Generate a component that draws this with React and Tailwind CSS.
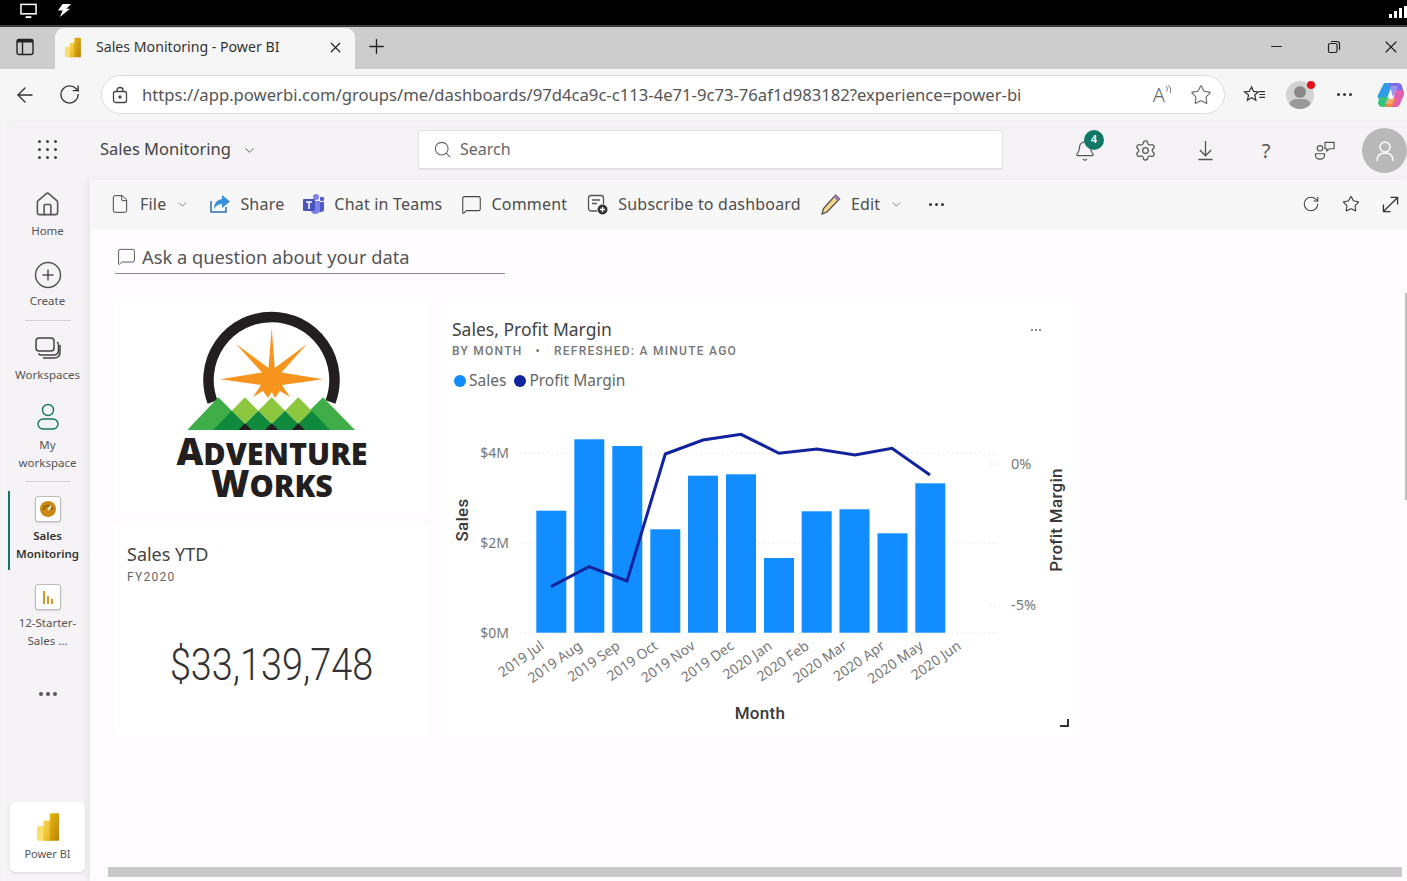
import React from "react";
import { X, Plus, ArrowLeft, RotateCw, Star, Search, Bell, Settings, ChevronDown, House, CirclePlus, File, MessageSquare, Minus } from "lucide-react";

const FONT = { fontFamily: '"Noto Sans", "Open Sans", sans-serif' };

function PbiIcon({ className, id }) {
  return (
    <svg viewBox="0 0 26 32" className={className}>
      <defs>
        <linearGradient id={id + "a"} x1="0" y1="0" x2="1" y2="1"><stop offset="0" stopColor="#e8b70f" /><stop offset="1" stopColor="#b8820c" /></linearGradient>
        <linearGradient id={id + "b"} x1="0" y1="0" x2="1" y2="1"><stop offset="0" stopColor="#f7d755" /><stop offset="1" stopColor="#e6ae1c" /></linearGradient>
      </defs>
      <path d="M1 17q0-2 2-2h6v16H3q-2 0-2-2z" fill="#f9df6e" />
      <rect x="8" y="9" width="9" height="22" fill={`url(#${id}b)`} />
      <path d="M15 2q0-1 1-1h8q1 0 1 1v28q0 1-1 1h-9z" fill={`url(#${id}a)`} />
    </svg>
  );
}

function WinRestore() {
  return (
    <svg viewBox="0 0 14 14" className="w-[14px] h-[14px]" fill="none" stroke="#222" strokeWidth="1.2">
      <rect x="1.5" y="3.5" width="8.5" height="9" rx="1.5" />
      <path d="M4 1.5h6q2.5 0 2.5 2.5v6" />
    </svg>
  );
}

function Copilot() {
  return (
    <svg viewBox="0 0 28 26" className="w-[28px] h-[26px]">
      <path d="M7 1h9l-5 13q-1 3-4 3H3Q0 17 1 13z" fill="#2f9be8" />
      <path d="M12 1h9q3 0 4 3l2 7h-6q-3 0-4 3l-1 1z" fill="#7a6ee8" />
      <path d="M21 8h3q3 0 3 4 0 1-1 3l-3 7q-1 3-4 3h-6l5-13q1-4 3-4z" fill="#e25fb0" />
      <path d="M3 15h7q3 0 2 2l-2 6q-1 2-3 2H6q-5 0-5-5z" fill="#35c27a" />
      <path d="M11 17h8l-3 6q-1 2-3 2H8z" fill="#f08a3c" />
      <path d="M14 4h7l-6 18H8z" fill="#ffffff" opacity=".25" />
    </svg>
  );
}

function ToolItem({ icon, label, ml, iconGap = "ml-[10px]", chevron }) {
  return (
    <div className={`flex items-center shrink-0 ${ml}`}>
      {icon}
      <span className={`${iconGap} text-[16px] tracking-[0.2px] text-[#4d4d4d] whitespace-nowrap`}>{label}</span>
      {chevron && <ChevronDown className="ml-[10px] w-[13px] h-[13px] text-[#666]" strokeWidth={1.5} />}
    </div>
  );
}

function NavItem({ icon, lines, iconH, textMt, mt, bold }) {
  return (
    <div className={`flex flex-col items-center ${mt}`}>
      <div className={`flex items-center justify-center ${iconH}`}>{icon}</div>
      <div className={`${textMt} text-center text-[11.5px] leading-[18px] whitespace-nowrap ${bold ? "font-semibold text-[#333]" : "text-[#555]"}`}>
        {lines.map((l) => (<div key={l}>{l}</div>))}
      </div>
    </div>
  );
}

function Logo() {
  return (
    <svg viewBox="0 0 313 212" className="w-[313px] h-[212px]">
      <path d="M97.5 102 A 63 63 0 1 1 215.5 102" fill="none" stroke="#231f20" strokeWidth="10.5" />
      <path fill="#f7941d" d="M156.700 28 L159.800 68 L192 44 L166.500 72.500 L208 79.300 L167 85 L175 97 L165 91 L160 98 L156.700 92 L153 98 L148 91 L138 97 L146 85 L105 79.300 L147 72.500 L121 44 L153.500 68z" />
      <path d="M72.300 130 L103.300 97.300 L136 130z" fill="#3fae49" />
      <path d="M175 130 L208 97.300 L240 130z" fill="#3fae49" />
      <path d="M130 97.300 L143.300 110.700 L130 124 L116.700 110.700z" fill="#8dc63f" />
      <path d="M156.700 97.300 L170 110.700 L156.700 124 L143.300 110.700z" fill="#8dc63f" />
      <path d="M183.300 97.300 L196.700 110.700 L183.300 124 L170 110.700z" fill="#8dc63f" />
      <path d="M98.300 130 L116.700 110.700 L130 124 L143.300 110.700 L156.700 124 L170 110.700 L183.300 124 L196.700 110.700 L215 130z" fill="#0f8a3c" />
      <path d="M123.400 130 L130 123.300 L136.600 130z M150 130 L156.700 123.300 L163.300 130z M176.700 130 L183.300 123.300 L190 130z" fill="#231f20" />
      <text x="157" y="165" textAnchor="middle" fill="#231f20" fontWeight="800" style={{ fontFamily: '"Open Sans", sans-serif' }}>
        <tspan fontSize="37">A</tspan><tspan fontSize="30.500">DVENTURE</tspan>
      </text>
      <text x="157" y="197" textAnchor="middle" fill="#231f20" fontWeight="800" style={{ fontFamily: '"Open Sans", sans-serif' }}>
        <tspan fontSize="37">W</tspan><tspan fontSize="30.500">ORKS</tspan>
      </text>
    </svg>
  );
}

const bars = [
  [536.3, 510.7], [574.3, 439.3], [612.3, 446], [650.3, 529.3], [688, 475.7], [726, 474.3],
  [764, 558], [801.7, 511.3], [839.5, 509.3], [877.5, 533.3], [915.3, 483.3],
];
const line = "551,586.7 589,566.7 627,581 665.3,454 703,440 741,434.3 779,453.3 817,449 855,455 892,448.3 930,475";
const xLabels = [
  ["2019 Jul", 545], ["2019 Aug", 583], ["2019 Sep", 621], ["2019 Oct", 659], ["2019 Nov", 696], ["2019 Dec", 735],
  ["2020 Jan", 773], ["2020 Feb", 810], ["2020 Mar", 848], ["2020 Apr", 886], ["2020 May", 924], ["2020 Jun", 962],
];

function Chart() {
  const tick = { fontFamily: '"Noto Sans", sans-serif', fontSize: 14, fill: "#777" };
  const rtick = { ...tick, fontSize: 14.5 };
  const axis = { fontFamily: 'Roboto, sans-serif', fontSize: 17, fill: "#3a3a3a", fontWeight: 500, letterSpacing: "0.3px" };
  return (
    <svg viewBox="440 395 638 340" className="w-[638px] h-[340px] block">
      {[453, 543, 633].map((y) => (
        <line key={y} x1="520" x2="998" y1={y} y2={y} stroke="#e4e4e4" strokeWidth="1" strokeDasharray="1.5 3" />
      ))}
      {[464, 605].map((y) => (
        <line key={y} x1="990" x2="1002" y1={y} y2={y} stroke="#e4e4e4" strokeWidth="1" strokeDasharray="1.5 3" />
      ))}
      {bars.map(([x, top]) => (
        <rect key={x} x={x} y={top} width="30" height={632.7 - top} fill="#118dff" />
      ))}
      <polyline points={line} fill="none" stroke="#12239e" strokeWidth="3" />
      <text x="509" y="458" textAnchor="end" style={tick}>$4M</text>
      <text x="509" y="548" textAnchor="end" style={tick}>$2M</text>
      <text x="509" y="638" textAnchor="end" style={tick}>$0M</text>
      <text x="1011" y="469" style={rtick}>0%</text>
      <text x="1011" y="610" style={rtick}>-5%</text>
      {xLabels.map(([t, x]) => (
        <text key={t} x={x} y="648" textAnchor="end" transform={`rotate(-35 ${x} 648)`} style={tick}>{t}</text>
      ))}
      <text x="760" y="719" textAnchor="middle" style={axis}>Month</text>
      <text transform="translate(468 520) rotate(-90)" textAnchor="middle" style={axis}>Sales</text>
      <text transform="translate(1062 520) rotate(-90)" textAnchor="middle" style={axis}>Profit Margin</text>
      <path d="M1068 719v7h-8" fill="none" stroke="#333" strokeWidth="2" />
    </svg>
  );
}

export default function App() {
  return (
    <div className="w-[1407px] h-[881px] overflow-hidden flex flex-col bg-[#f7f6f6] relative" style={FONT}>
      {/* OS bar */}
      <div className="h-[27px] shrink-0 bg-black border-b-2 border-[#3c3c3c] flex items-center relative">
        <svg viewBox="0 0 18 16" className="ml-[20px] w-[17px] h-[16px] -mt-[3px]" fill="none" stroke="#fff" strokeWidth="1.6">
          <rect x="1" y="1" width="16" height="10" /><path d="M6 14.5h6" strokeWidth="2" />
        </svg>
        <svg viewBox="0 0 16 16" className="ml-[20px] w-[15px] h-[15px] -mt-[4px]" fill="#fff">
          <path d="M6 1h9L10 6h4L3 15l3-7H1z" />
        </svg>
        <div className="ml-auto flex items-end gap-[2px] h-[12px] -mt-[2px] pr-0">
          <div className="w-[3px] h-[4px] bg-white" /><div className="w-[3px] h-[7px] bg-white" /><div className="w-[3px] h-[10px] bg-white" /><div className="w-[3px] h-[12px] bg-white" />
        </div>
      </div>

      {/* Tabs */}
      <div className="h-[42px] shrink-0 bg-[#cdcdcd] flex items-center pb-[3px]">
        <svg viewBox="0 0 18 18" className="ml-[16px] w-[18px] h-[18px]" fill="none" stroke="#222" strokeWidth="1.4">
          <rect x="1" y="1.500" width="16" height="15" rx="2" /><path d="M1 3h16" strokeWidth="3" /><path d="M6.500 3v13" />
        </svg>
        <div className="ml-[21px] w-[300px] h-[41px] -mb-[3px] self-end bg-[#f7f6f6] rounded-t-[9px] flex items-center pb-[3px]">
          <PbiIcon id="tab" className="ml-[9px] w-[18px] h-[21px]" />
          <span className="ml-[14px] text-[14.150px] text-[#333] whitespace-nowrap">Sales Monitoring - Power BI</span>
          <X className="ml-auto mr-[11px] w-[17px] h-[17px] text-[#222]" strokeWidth={1.7} />
        </div>
        <Plus className="ml-[10px] w-[23px] h-[23px] text-[#222]" strokeWidth={1.4} />
        <Minus className="ml-auto w-[17px] h-[17px] text-[#222]" strokeWidth={1.6} />
        <div className="ml-[42px]"><WinRestore /></div>
        <X className="ml-[40px] mr-[6px] w-[20px] h-[20px] text-[#222]" strokeWidth={1.4} />
      </div>

      {/* Address bar */}
      <div className="h-[51px] shrink-0 flex items-center">
        <ArrowLeft className="ml-[13px] w-[24px] h-[24px] text-[#333]" strokeWidth={1.4} />
        <RotateCw className="ml-[21px] w-[23px] h-[23px] text-[#333]" strokeWidth={1.4} />
        <div className="ml-[20px] w-[1124px] h-[39px] rounded-full bg-white border border-[#dcdcdc] flex items-center">
          <svg viewBox="0 0 16 18" className="ml-[10px] w-[16px] h-[18px]" fill="none" stroke="#444" strokeWidth="1.3">
            <rect x="1.5" y="5.5" width="13" height="11" rx="2" /><path d="M5 5.5V4q0-2.5 3-2.5T11 4v1.5" /><circle cx="8" cy="11" r="1" fill="#444" />
          </svg>
          <span className="ml-[14px] mt-[1px] text-[16.650px] text-[#555] whitespace-nowrap">https://app.powerbi.com/groups/me/dashboards/97d4ca9c-c113-4e71-9c73-76af1d983182?experience=power-bi</span>
          <div className="ml-auto flex items-center text-[#666]">
            <span className="text-[20px] leading-none font-light">A</span>
            <svg viewBox="0 0 8 12" className="w-[7px] h-[11px] -mt-[8px]" fill="none" stroke="#666" strokeWidth="1"><path d="M1 1q3 3 1 6M4 0q4 4 2 9" /></svg>
            <Star className="ml-[18px] mr-[12px] w-[22px] h-[22px]" strokeWidth={1.2} />
          </div>
        </div>
        <svg viewBox="0 0 24 22" className="ml-[18px] w-[23px] h-[21px]" fill="none" stroke="#333" strokeWidth="1.3">
          <path d="M9 3l2 4.800 5 .5-3.800 3.200 1.200 5.500-4.400-2.700-4.400 2.700 1.200-5.500L1.500 8.300l5-.5z" /><path d="M17 11h6M17 14h6M17 8h6" strokeWidth="1.2" />
        </svg>
        <div className="ml-[20px] relative w-[28px] h-[28px] rounded-full bg-[#d4d3d3] overflow-hidden">
          <div className="absolute left-[8px] top-[5px] w-[12px] h-[12px] rounded-full bg-[#8a8a8a]" />
          <div className="absolute left-[3px] top-[18px] w-[22px] h-[14px] rounded-full bg-[#999]" />
        </div>
        <div className="absolute left-[1307px] top-[81px] w-[8px] h-[8px] rounded-full bg-[#e3101a]" />
        <div className="ml-[23px] flex gap-[3px]">
          <div className="w-[3px] h-[3px] rounded-full bg-[#333]" /><div className="w-[3px] h-[3px] rounded-full bg-[#333]" /><div className="w-[3px] h-[3px] rounded-full bg-[#333]" />
        </div>
        <div className="ml-[25px] shrink-0"><Copilot /></div>
      </div>

      {/* App */}
      <div className="flex-1 min-h-0 ml-[5px] bg-[#f5f3f5] rounded-tl-[8px] flex flex-col border-t border-[#efefef]">
        {/* Header */}
        <div className="h-[59px] shrink-0 flex items-center relative">
          <div className="ml-[33px] -mt-[2px] grid grid-cols-3 gap-[5px] w-[19px]">
            {Array.from({ length: 9 }).map((_, i) => (<div key={i} className="w-[3px] h-[3px] rounded-full bg-[#444]" />))}
          </div>
          <span className="ml-[43px] -mt-[3px] text-[16.500px] text-[#444] whitespace-nowrap">Sales Monitoring</span>
          <ChevronDown className="ml-[11px] -mt-[1px] w-[15px] h-[15px] text-[#555]" strokeWidth={1.5} />
          <div className="absolute left-[413px] top-[9px] w-[585px] h-[40px] bg-white border border-[#e2e0e2] border-b-2 rounded-[3px] flex items-center">
            <Search className="ml-[14px] w-[19px] h-[19px] text-[#666]" strokeWidth={1.4} />
            <span className="ml-[8px] -mt-[2px] text-[16px] text-[#666]">Search</span>
          </div>
          <div className="ml-auto flex items-center">
            <div className="relative">
              <Bell className="w-[22px] h-[22px] text-[#555]" strokeWidth={1.3} />
              <div className="absolute -top-[10px] left-[10px] w-[20px] h-[20px] rounded-full bg-[#117865] text-white text-[11px] font-semibold flex items-center justify-center">4</div>
            </div>
            <Settings className="ml-[38px] w-[23px] h-[23px] text-[#555]" strokeWidth={1.3} />
            <svg viewBox="0 0 18 22" className="ml-[40px] w-[17px] h-[21px]" fill="none" stroke="#555" strokeWidth="1.4"><path d="M9 1v15M3 10.5L9 16.5l6-6M1.5 20.5h15" /></svg>
            <span className="ml-[46px] text-[20px] text-[#555] w-[12px] text-center">?</span>
            <svg viewBox="0 0 24 22" className="ml-[42px] w-[22px] h-[20px]" fill="none" stroke="#555" strokeWidth="1.3">
              <circle cx="6.5" cy="8" r="3" /><path d="M1.5 14h10v1.5q0 4.5-5 4.5t-5-4.500z" /><path d="M12 1.500h10v7h-5l-3 2.500v-2.500h-2z" />
            </svg>
            <div className="ml-[26px] w-[45px] h-[45px] rounded-full bg-[#b9b9b9] flex items-center justify-center">
              <svg viewBox="0 0 20 22" className="w-[20px] h-[22px]" fill="none" stroke="#fff" strokeWidth="1.5"><circle cx="10" cy="7" r="5" /><path d="M2 21q0-8 8-8t8 8" /></svg>
            </div>
          </div>
        </div>

        <div className="flex-1 min-h-0 flex">
          {/* Sidebar */}
          <div className="w-[85px] shrink-0 flex flex-col relative">
            <NavItem mt="mt-[11px]" iconH="h-[26px]" textMt="mt-[5px]" lines={["Home"]} icon={<House className="w-[27px] h-[27px] text-[#555]" strokeWidth={1.4} />} />
            <NavItem mt="mt-[21px]" iconH="h-[28px]" textMt="mt-[3px]" lines={["Create"]} icon={<CirclePlus className="w-[30px] h-[30px] text-[#555]" strokeWidth={1.2} />} />
            <div className="mt-[10px] mx-auto w-[46px] h-px bg-[#d4d2d4]" />
            <NavItem mt="mt-[16px]" iconH="h-[21px]" textMt="mt-[8px]" lines={["Workspaces"]} icon={
              <svg viewBox="0 0 26 22" className="w-[26px] h-[22px]" fill="none" stroke="#444" strokeWidth="1.5"><rect x="1" y="1" width="18" height="13" rx="3" /><path d="M22 5q1.500 1 1.500 3v5q0 5-5 5h-12q-2 0-3-1.500" /><path d="M25 8v7q0 6-6 6H8" /></svg>
            } />
            <NavItem mt="mt-[19px]" iconH="h-[27px]" textMt="mt-[6px]" lines={["My", "workspace"]} icon={
              <svg viewBox="0 0 22 27" className="w-[22px] h-[27px]" fill="none" stroke="#117865" strokeWidth="1.4"><circle cx="11" cy="7" r="5.500" /><rect x="1" y="16" width="20" height="10" rx="5" /></svg>
            } />
            <div className="mt-[9px] mx-auto w-[46px] h-px bg-[#d4d2d4]" />
            <NavItem mt="mt-[13px]" iconH="h-[27px]" textMt="mt-[5px]" bold lines={["Sales", "Monitoring"]} icon={
              <div className="w-[26px] h-[26px] rounded-[3px] bg-white border border-[#bbb] shadow-sm flex items-center justify-center">
                <svg viewBox="0 0 16 16" className="w-[16px] h-[16px]"><circle cx="8" cy="8" r="8" fill="#c98a14" /><path d="M3.500 9a4.500 4.500 0 0 1 9 0" fill="none" stroke="#8a5c10" strokeWidth="1.500" /><path d="M8 9l3-4" stroke="#fff" strokeWidth="1.500" /></svg>
              </div>
            } />
            <div className="absolute left-[3px] top-[311px] w-[2px] h-[79px] bg-[#117865]" />
            <NavItem mt="mt-[20px]" iconH="h-[27px]" textMt="mt-[4px]" lines={["12-Starter-", "Sales ..."]} icon={
              <div className="w-[26px] h-[26px] rounded-[3px] bg-white border border-[#bbb] shadow-sm flex items-end justify-center gap-[2px] pb-[5px]">
                <div className="w-[2px] h-[13px] bg-[#d09a22]" /><div className="w-[2px] h-[8px] bg-[#d09a22]" /><div className="w-[2px] h-[5px] bg-[#d09a22]" />
              </div>
            } />
            <div className="mt-[42px] flex justify-center gap-[3px]">
              <div className="w-[4px] h-[4px] rounded-full bg-[#555]" /><div className="w-[4px] h-[4px] rounded-full bg-[#555]" /><div className="w-[4px] h-[4px] rounded-full bg-[#555]" />
            </div>
            <div className="mt-auto mb-[9px] ml-[5px] w-[75px] h-[70px] bg-white rounded-[5px] shadow-sm flex flex-col items-center">
              <PbiIcon id="card" className="mt-[9px] w-[24px] h-[32px]" />
              <span className="mt-[3px] text-[11px] leading-[16px] text-[#555]">Power BI</span>
            </div>
          </div>

          {/* Content */}
          <div className="flex-1 min-w-0 flex flex-col bg-[#fefcfe] shadow-[-3px_0_6px_rgba(0,0,0,0.06)] rounded-tl-[3px] relative">
            <div className="h-[50px] shrink-0 bg-[#f7f7f7] flex items-center pb-[2px]">
              <ToolItem ml="ml-[20px]" label="File" iconGap="ml-[10px]" chevron icon={<File className="w-[20px] h-[20px] text-[#444]" strokeWidth={1.2} />} />
              <ToolItem ml="ml-[20px]" label="Share" iconGap="ml-[9px]" icon={
                <svg viewBox="0 0 22 20" className="w-[22px] h-[20px]"><path d="M2 7v11h15v-5" fill="none" stroke="#2b6fb5" strokeWidth="1.500" /><path d="M13 1l8 6.500-8 6.500v-4q-5 0-8 5 0-9 8-10z" fill="#3a8fd9" /></svg>
              } />
              <ToolItem ml="ml-[19px]" label="Chat in Teams" iconGap="ml-[9px]" icon={
                <svg viewBox="0 0 22 22" className="w-[22px] h-[22px]"><circle cx="13" cy="4" r="3" fill="#7b83eb" /><circle cx="19" cy="6" r="2.200" fill="#5059c9" /><path d="M15 9h6v7q0 3-3 3h-3z" fill="#5059c9" /><path d="M8 8h9v9q0 4-5 4-4 0-4-4z" fill="#7b83eb" /><rect x="0" y="6" width="12" height="12" rx="1" fill="#4b53bc" /><path d="M3 9h6M6 9v7" stroke="#fff" strokeWidth="1.500" /></svg>
              } />
              <ToolItem ml="ml-[19px]" label="Comment" iconGap="ml-[9px]" icon={<MessageSquare className="w-[21px] h-[21px] text-[#444]" strokeWidth={1.2} />} />
              <ToolItem ml="ml-[20px]" label="Subscribe to dashboard" iconGap="ml-[10px]" icon={
                <svg viewBox="0 0 21 21" className="w-[21px] h-[21px]" fill="none" stroke="#555" strokeWidth="1.300"><path d="M10 17H4q-2.500 0-2.500-2.500V4Q1.500 1.500 4 1.500h10q2.500 0 2.500 2.500v6" /><path d="M5 6h8M5 9.500h5" /><circle cx="15.500" cy="15.500" r="5" fill="#333" stroke="none" /><path d="M13 15.500h5M15.500 13v5" stroke="#fff" /></svg>
              } />
              <ToolItem ml="ml-[20px]" label="Edit" iconGap="ml-[10px]" chevron icon={
                <svg viewBox="0 0 20 22" className="w-[20px] h-[22px]"><path d="M14.500 2l4 4L6 19l-5 2 1.500-5.500z" fill="#f0d68a" stroke="#4a4a4a" strokeWidth="1.200" /><path d="M14.500 2l4 4-2 2-4-4z" fill="#9f7ab5" /></svg>
              } />
              <div className="ml-[26px] flex gap-[3px]">
                <div className="w-[3px] h-[3px] rounded-full bg-[#333]" /><div className="w-[3px] h-[3px] rounded-full bg-[#333]" /><div className="w-[3px] h-[3px] rounded-full bg-[#333]" />
              </div>
              <div className="ml-auto flex items-center mr-[8px]">
                <RotateCw className="w-[18px] h-[18px] text-[#444]" strokeWidth={1.4} />
                <Star className="ml-[22px] w-[18px] h-[18px] text-[#333]" strokeWidth={1.4} />
                <svg viewBox="0 0 18 18" className="ml-[22px] w-[17px] h-[17px]" fill="none" stroke="#333" strokeWidth="1.400"><path d="M1.500 16.500L16.500 1.500M9 1.500h7.500V9M1.500 9v7.500H9" /></svg>
              </div>
            </div>

            {/* Q&A */}
            <div className="mt-[15px] ml-[25px] w-[390px] h-[29px] border-b border-[#888] flex items-center shrink-0 pb-[5px]">
              <MessageSquare className="ml-[2px] w-[19px] h-[19px] text-[#555]" strokeWidth={1.2} />
              <span className="ml-[6px] text-[18.300px] text-[#555] whitespace-nowrap">Ask a question about your data</span>
            </div>

            {/* Tiles */}
            <div className="mt-[26px] ml-[25px] grid grid-cols-[313px_638px] gap-x-[12px] w-fit">
              <div className="flex flex-col gap-[13px]">
                <div className="h-[212px] bg-white flex"><Logo /></div>
                <div className="h-[210px] bg-white flex flex-col">
                  <div className="mt-[16px] ml-[12px] text-[18px] leading-[26px] text-[#444]">Sales YTD</div>
                  <div className="ml-[12px] mt-[2px] text-[12px] leading-[16px] tracking-[1.300px] text-[#666]" style={{ fontFamily: "Roboto, sans-serif" }}>FY2020</div>
                  <div className="mt-[54px] text-center text-[45px] leading-[52px] font-light text-[#333] scale-x-[0.84]" style={{ fontFamily: "Roboto, sans-serif" }}>$33,139,748</div>
                </div>
              </div>
              <div className="h-[435px] bg-white flex flex-col relative">
                <div className="mt-[16px] ml-[12px] text-[17.500px] leading-[26px] text-[#444]">Sales, Profit Margin</div>
                <div className="ml-[12px] mt-[1px] h-[16px] flex items-center text-[12px] font-medium tracking-[1.250px] text-[#777]" style={{ fontFamily: "Roboto, sans-serif" }}>
                  <span>BY MONTH</span><span className="mx-[13px]">•</span><span>REFRESHED: A MINUTE AGO</span>
                </div>
                <div className="ml-[14px] mt-[11px] h-[22px] flex items-center text-[15.500px] text-[#666]">
                  <div className="w-[12px] h-[12px] rounded-full bg-[#118dff]" /><span className="ml-[3px]">Sales</span>
                  <div className="ml-[8px] w-[12px] h-[12px] rounded-full bg-[#12239e]" /><span className="ml-[3px]">Profit Margin</span>
                </div>
                <div className="absolute right-[37px] top-[29px] flex gap-[2px]">
                  <div className="w-[2px] h-[2px] bg-[#888]" /><div className="w-[2px] h-[2px] bg-[#888]" /><div className="w-[2px] h-[2px] bg-[#888]" />
                </div>
                <div className="mt-auto"><Chart /></div>
              </div>
            </div>

            {/* scrollbars */}
            <div className="absolute left-[18px] bottom-[4px] w-[1294px] h-[10px] bg-[#c8c8c8]" />
            <div className="absolute right-0 top-[113px] w-[2px] h-[207px] bg-[#bdbdbd]" />
          </div>
        </div>
      </div>
    </div>
  );
}
